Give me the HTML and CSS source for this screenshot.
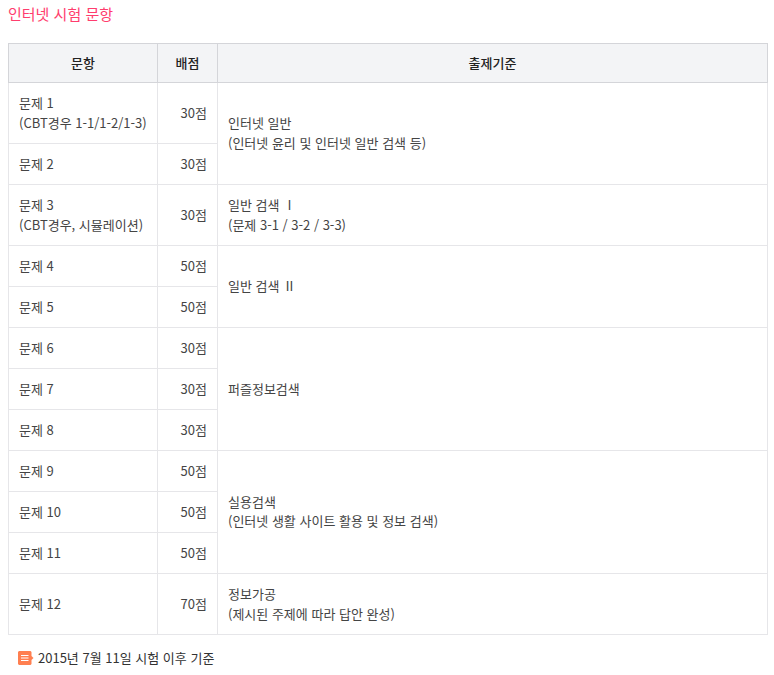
FILE: index.html
```html
<!DOCTYPE html>
<html lang="ko">
<head>
<meta charset="utf-8">
<title>인터넷 시험 문항</title>
<link rel="stylesheet" href="styles.css">
</head>
<body>
<h2 class="title">인터넷 시험 문항</h2>
<table class="grid">
<colgroup><col class="c1"><col class="c2"><col class="c3"></colgroup>
<thead>
<tr><th>문항</th><th>배점</th><th>출제기준</th></tr>
</thead>
<tbody>
<tr class="tall"><td class="two">문제 1<br>(CBT경우 1-1/1-2/1-3)</td><td class="num">30점</td><td rowspan="2" class="span">인터넷 일반<br>(인터넷 윤리 및 인터넷 일반 검색 등)</td></tr>
<tr><td>문제 2</td><td class="num">30점</td></tr>
<tr class="tall"><td class="two">문제 3<br>(CBT경우, 시뮬레이션)</td><td class="num">30점</td><td class="two">일반 검색 Ⅰ<br>(문제 3-1 / 3-2 / 3-3)</td></tr>
<tr><td>문제 4</td><td class="num">50점</td><td rowspan="2" class="span">일반 검색 Ⅱ</td></tr>
<tr><td>문제 5</td><td class="num">50점</td></tr>
<tr><td>문제 6</td><td class="num">30점</td><td rowspan="3">퍼즐정보검색</td></tr>
<tr><td>문제 7</td><td class="num">30점</td></tr>
<tr><td>문제 8</td><td class="num">30점</td></tr>
<tr><td>문제 9</td><td class="num">50점</td><td rowspan="3" class="span">실용검색<br>(인터넷 생활 사이트 활용 및 정보 검색)</td></tr>
<tr><td>문제 10</td><td class="num">50점</td></tr>
<tr><td>문제 11</td><td class="num">50점</td></tr>
<tr class="tall"><td>문제 12</td><td class="num">70점</td><td class="two">정보가공<br>(제시된 주제에 따라 답안 완성)</td></tr>
</tbody>
</table>
<p class="note"><svg class="note-icon" width="16" height="14" viewBox="0 0 16 14"><path d="M1 0H12.500L13.500 1V5L15.500 7L13.500 9V13L12.500 14H1L0 13V1Z" fill="#ff7f50"/><path d="M3 4.500H10.500M3 7H10.500M3 9.500H10.500" stroke="#fff" stroke-width="1"/></svg>2015년 7월 11일 시험 이후 기준</p>
</body>
</html>
```
FILE: styles.css
```css
html, body { background: #fff; }
body {
  margin: 0;
  padding: 0 6px 0 8px;
  font-family: "Noto Sans CJK KR", "Noto Sans", sans-serif;
  font-size: 13px;
  line-height: 19.5px;
  color: #444;
}
.title {
  margin: 0;
  padding-top: 3px;
  height: 43px;
  box-sizing: border-box;
  font-size: 15px;
  font-weight: 400;
  line-height: 21px;
  color: #ff3d6e;
}
.grid {
  width: 760px;
  border-collapse: collapse;
  table-layout: fixed;
  border: 1px solid #e4e4e7;
}
.c1 { width: 149px; }
.c2 { width: 60px; }
.grid th {
  height: 38px;
  padding: 0;
  background: #f3f4f6;
  border: 1px solid #d4d5d9;
  font-weight: 500;
  color: #222;
  text-align: center;
}
.grid td {
  height: 41px;
  padding: 10px;
  box-sizing: border-box;
  border: 1px solid #e6e6e9;
}
.grid .tall td { height: 61px; }
.grid td.two { padding-bottom: 10.5px; }
.grid td.span { padding-bottom: 11.5px; }
.grid td.num { text-align: right; }
.note {
  display: flex;
  align-items: center;
  margin: 13px 0 0 10px;
  color: #333;
}
.note-icon { margin-right: 4px; }
```
